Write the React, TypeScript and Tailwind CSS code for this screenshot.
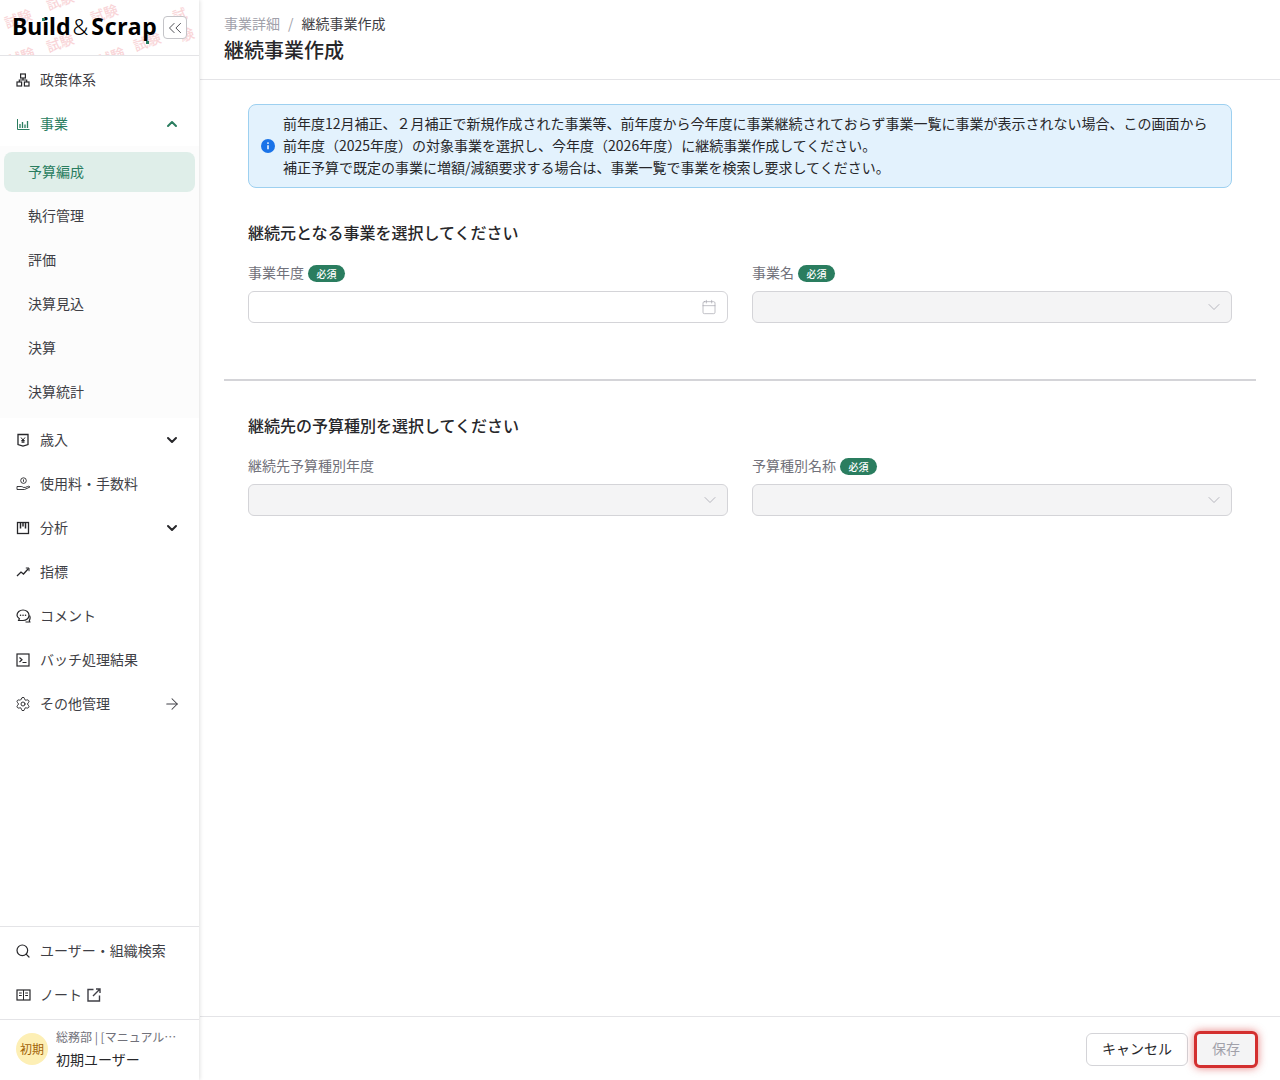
import React from 'react';
import {
  ChevronUp,
  ChevronDown,
  ChevronsLeft,
  ArrowRight,
  Search,
  Settings,
  Calendar,
} from 'lucide-react';

const TreeIcon = () => (
  <svg width="14" height="14" viewBox="0 0 14 14" fill="none" stroke="currentColor" strokeWidth="1.2">
    <rect x="4.6" y="1" width="4.8" height="4" />
    <rect x="1" y="9" width="4.6" height="4" />
    <rect x="8.4" y="9" width="4.6" height="4" />
    <path d="M7 5v2H3.3v2M7 7h3.7v2" />
  </svg>
);

const BarIcon = () => (
  <svg width="14" height="14" viewBox="0 0 14 14" fill="none" stroke="currentColor" strokeWidth="1">
    <path d="M1.5 2v10.500h12" />
    <path d="M4 11V7M6.500 11V5M9 11V7.500M11.500 11V4" strokeWidth="1.300" />
  </svg>
);

const YenIcon = () => (
  <svg width="14" height="14" viewBox="0 0 14 14" fill="none" stroke="currentColor" strokeWidth="1.300">
    <path d="M2 1.500h10v10L7 13 2 11.500z" />
    <path d="M5 4.500l2 2.500 2-2.500M7 7v3M5.300 7.500h3.400M5.300 9h3.400" strokeWidth="1" />
  </svg>
);

const HandIcon = () => (
  <svg width="15" height="14" viewBox="0 0 15 14" fill="none" stroke="currentColor" strokeWidth="0.900">
    <circle cx="7.500" cy="3.600" r="2.800" />
    <path d="M7.500 2.400v2.400" />
    <path d="M1 9.500h4.200c1 0 1.400.4 2 .9h2.200M1 9.500v3h7.500l5.500-2.500c-.6-.9-1.500-.9-2.500-.5l-2.100.9" />
  </svg>
);

const BoardIcon = () => (
  <svg width="14" height="14" viewBox="0 0 14 14" fill="none" stroke="currentColor" strokeWidth="1.300">
    <rect x="1.500" y="1.500" width="11" height="11" />
    <path d="M4.500 2v5.500M7 2v3.500M9.500 2v5.500" strokeWidth="1.500" />
  </svg>
);

const TrendIcon = () => (
  <svg width="14" height="14" viewBox="0 0 14 14" fill="none" stroke="currentColor" strokeWidth="1.300">
    <path d="M1 11l4-4 2.500 2L12.500 3.500" />
    <path d="M9.800 3h3.200v3.200" strokeWidth="1" />
  </svg>
);

const CommentIcon = () => (
  <svg width="15" height="14" viewBox="0 0 15 14" fill="none" stroke="currentColor" strokeWidth="1.200">
    <path d="M7 1c3.300 0 6 2.300 6 5.300 0 3-2.700 5.200-6 5.200H2.600l.8-1.700C2 8.800 1 7.700 1 6.300 1 3.300 3.700 1 7 1z" />
    <path d="M13.500 6.500c.6 1 .6 3.500-.2 5l.5 1.500H9.500" />
    <path d="M4.500 6.300h.1M7 6.300h.1M9.500 6.300h.1" strokeWidth="1.500" strokeLinecap="round" />
  </svg>
);

const TerminalIcon = () => (
  <svg width="14" height="14" viewBox="0 0 14 14" fill="none" stroke="currentColor" strokeWidth="1.200">
    <rect x="1" y="1" width="12" height="12" />
    <path d="M3.500 4.500L6 6.800 3.500 9M6.500 9.500h4" />
  </svg>
);

const NoteIcon = () => (
  <svg width="15" height="12" viewBox="0 0 15 12" fill="none" stroke="currentColor" strokeWidth="1.200">
    <rect x="1" y="1" width="13" height="10" />
    <path d="M7.500 1v10M3 4h2.800M3 6.500h2.800M9.200 4H12M9.200 6.500H12" strokeWidth="1" />
  </svg>
);

const ExternalIcon = () => (
  <svg width="14" height="14" viewBox="0 0 14 14" fill="none" stroke="currentColor" strokeWidth="1.400" className="ml-[5px]">
    <path d="M6.500 1.500H1v11.500h11.500V7.500" />
    <path d="M6 8l6.500-6.500M9 1h4v4" />
  </svg>
);

const InfoDot = () => (
  <svg width="14" height="14" viewBox="0 0 14 14" className="shrink-0 mr-[8px]">
    <circle cx="7" cy="7" r="7" fill="#1a73e8" />
    <path d="M7 6.300v4" stroke="white" strokeWidth="1.500" />
    <circle cx="7" cy="4.100" r="0.900" fill="white" />
  </svg>
);

const Logo = () => (
  <div className="relative flex items-baseline text-[23px] leading-none font-bold text-black font-['Noto_Sans'] -mt-[2px]">
    <span>Build</span>
    <span className="font-light text-[22px] ml-[2px] mr-[3px]">&amp;</span>
    <span className="tracking-[0.7px]">Scrap</span>
    <span className="absolute left-[30px] top-[3px] w-[3px] h-[3px] bg-[#2a7d5f]" />
    <span className="absolute left-[134px] top-[26px] w-[3px] h-[3px] bg-[#2a7d5f]" />
  </div>
);

const marks = [
  'left-[4px] top-[8px]', 'left-[90px] top-[3px]', 'left-[176px] top-[2px]', 'left-[133px] top-[31px]',
  'left-[46px] top-[32px]', 'left-[7px] top-[46px]', 'left-[97px] top-[46px]', 'left-[46px] top-[-10px]',
];

const NavItem = ({ icon, label, right, color }: { icon: React.ReactNode; label: string; right?: React.ReactNode; color?: string }) => (
  <div className={`h-[44px] flex items-center pl-[15px] pr-[19px] text-[14px] ${color || 'text-[#3f3f46]'}`}>
    <span className={`w-[16px] mr-[9px] flex justify-center ${color ? '' : 'text-[#27272a]'}`}>{icon}</span>
    <span className="flex-1 pb-[2px]">{label}</span>
    {right}
  </div>
);

const Required = () => (
  <span className="ml-[4px] mt-[2px] inline-flex items-center justify-center w-[37px] h-[17px] rounded-full bg-[#2a7d5f] text-white text-[10px] font-medium">必須</span>
);

const Field = ({ label, required, disabled, icon }: { label: string; required?: boolean; disabled?: boolean; icon: React.ReactNode }) => (
  <div className="flex-1">
    <div className="h-[22px] flex items-center text-[14px] text-[#71717a] mb-[7px] pb-[2px]">
      {label}
      {required && <Required />}
    </div>
    <div className={`h-[32px] rounded-[6px] border border-[#d4d4d8] flex items-center justify-end pr-[7px] text-[#a1a1aa] ${disabled ? 'bg-[#f4f4f5]' : 'bg-white'}`}>
      {icon}
    </div>
  </div>
);

const Chevron = () => <ChevronDown size={20} strokeWidth={0.9} />;

export default function App() {
  const sub = ['執行管理', '評価', '決算見込', '決算', '決算統計'];
  return (
    <div className="h-[1080px] w-[1280px] flex bg-white overflow-hidden font-['Noto_Sans_CJK_JP','Noto_Sans',sans-serif]">
      {/* Sidebar */}
      <aside className="w-[199px] shrink-0 flex flex-col bg-white shadow-[1px_0_4px_rgba(0,0,0,0.12)] z-10">
        <div className="relative h-[56px] shrink-0 border-b border-[#e4e4e7] overflow-hidden flex items-center justify-between pl-[12px] pr-[12px]">
          {marks.map((m) => (
            <span key={m} className={`absolute ${m} -rotate-[20deg] text-[14px] font-medium text-[#f9d5d8]`}>試験</span>
          ))}
          <Logo />
          <button className="relative w-[24px] h-[23px] flex items-center justify-center rounded-[4px] border border-[#c4c4c8] bg-white text-[#3f3f46]">
            <ChevronsLeft size={22} strokeWidth={1} />
          </button>
        </div>

        <nav className="flex-1 pt-[2px]">
          <NavItem icon={<TreeIcon />} label="政策体系" />
          <NavItem icon={<BarIcon />} label="事業" color="text-[#2a7d5f]" right={<ChevronUp size={16} strokeWidth={3} />} />
          <div className="pb-[4px] bg-[#fcfcfc]">
            <div className="pt-[6px] px-[4px]">
              <div className="h-[40px] rounded-[8px] bg-[#dfeee9] text-[#2a7d5f] text-[14px] flex items-center pl-[24px] pb-[2px] mb-[2px]">予算編成</div>
            </div>
            {sub.map((s) => (
              <div key={s} className="h-[44px] flex items-center pl-[28px] pb-[2px] text-[14px] text-[#3f3f46]">{s}</div>
            ))}
          </div>
          <NavItem icon={<YenIcon />} label="歳入" right={<ChevronDown size={16} strokeWidth={3} className="text-[#27272a]" />} />
          <NavItem icon={<HandIcon />} label="使用料・手数料" />
          <NavItem icon={<BoardIcon />} label="分析" right={<ChevronDown size={16} strokeWidth={3} className="text-[#27272a]" />} />
          <NavItem icon={<TrendIcon />} label="指標" />
          <NavItem icon={<CommentIcon />} label="コメント" />
          <NavItem icon={<TerminalIcon />} label="バッチ処理結果" />
          <NavItem icon={<Settings size={16} strokeWidth={1.4} />} label="その他管理" right={<ArrowRight size={18} strokeWidth={1.4} className="-mr-[1px]" />} />
        </nav>

        <div className="border-t border-[#e4e4e7] pt-[2px] pb-[2px]">
          <NavItem icon={<Search size={16} strokeWidth={1.8} />} label="ユーザー・組織検索" />
          <div className="h-[44px] flex items-center pl-[15px] text-[14px] text-[#3f3f46]">
            <span className="w-[16px] mr-[9px] flex justify-center text-[#27272a]"><NoteIcon /></span>
            <span className="pb-[2px]">ノート</span>
            <ExternalIcon />
          </div>
        </div>
        <div className="h-[61px] border-t border-[#e4e4e7] flex items-center pl-[16px] pb-[2px]">
          <div className="w-[32px] h-[32px] rounded-full bg-[#fdefb5] text-[#a16207] text-[12px] flex items-center justify-center">初期</div>
          <div className="ml-[8px] w-[124px]">
            <div className="text-[12px] leading-[20px] text-[#71717a] truncate">総務部 | [マニュアル確認用]</div>
            <div className="text-[14px] leading-[24px] text-[#27272a]">初期ユーザー</div>
          </div>
        </div>
      </aside>

      {/* Main */}
      <main className="flex-1 flex flex-col min-w-0 ml-[1px]">
        <header className="h-[80px] shrink-0 border-b border-[#e4e4e7] pl-[24px] pt-[12px]">
          <div className="flex items-center text-[14px] leading-[22px]">
            <span className="text-[#a1a1aa]">事業詳細</span>
            <span className="mx-[8px] text-[#a1a1aa]">/</span>
            <span className="text-[#3f3f46]">継続事業作成</span>
          </div>
          <h1 className="text-[20px] leading-[30px] font-medium text-[#27272a] mt-[1px]">継続事業作成</h1>
        </header>

        <div className="flex-1 px-[24px] pt-[24px]">
          <div className="mx-[24px] h-[84px] rounded-[8px] border border-[#9dd0f0] bg-[#e3f2fd] flex items-center pl-[12px] pr-[12px] text-[14px] leading-[22px] text-[#27272a]">
            <InfoDot />
            <div className="pb-[2px]">
              前年度12月補正、２月補正で新規作成された事業等、前年度から今年度に事業継続されておらず事業一覧に事業が表示されない場合、この画面から<br />
              前年度（2025年度）の対象事業を選択し、今年度（2026年度）に継続事業作成してください。<br />
              補正予算で既定の事業に増額/減額要求する場合は、事業一覧で事業を検索し要求してください。
            </div>
          </div>

          <section className="mx-[24px] pt-[32px] pb-[56px]">
            <h2 className="text-[16px] leading-[24px] font-medium text-[#27272a] mb-[18px]">継続元となる事業を選択してください</h2>
            <div className="flex gap-[24px]">
              <Field label="事業年度" required icon={<Calendar size={16} strokeWidth={1} className="mr-[3px]" />} />
              <Field label="事業名" required disabled icon={<Chevron />} />
            </div>
          </section>
          <div className="h-[2px] bg-[#d4d4d8]" />

          <section className="mx-[24px] pt-[32px]">
            <h2 className="text-[16px] leading-[24px] font-medium text-[#27272a] mb-[18px]">継続先の予算種別を選択してください</h2>
            <div className="flex gap-[24px]">
              <Field label="継続先予算種別年度" disabled icon={<Chevron />} />
              <Field label="予算種別名称" required disabled icon={<Chevron />} />
            </div>
          </section>
        </div>

        <footer className="h-[64px] shrink-0 border-t border-[#e4e4e7] flex items-center justify-end pr-[22px] pt-[2px]">
          <button className="w-[102px] h-[33px] rounded-[6px] border border-[#d4d4d8] bg-white text-[14px] text-[#27272a] pb-[2px]">キャンセル</button>
          <button className="ml-[6px] w-[64px] h-[37px] rounded-[6px] border-[3px] border-[#d32f2f] bg-[#f4f4f5] text-[14px] text-[#a1a1aa] pb-[2px] shadow-[0_0_8px_rgba(211,47,47,0.6)]">保存</button>
        </footer>
      </main>
    </div>
  );
}
